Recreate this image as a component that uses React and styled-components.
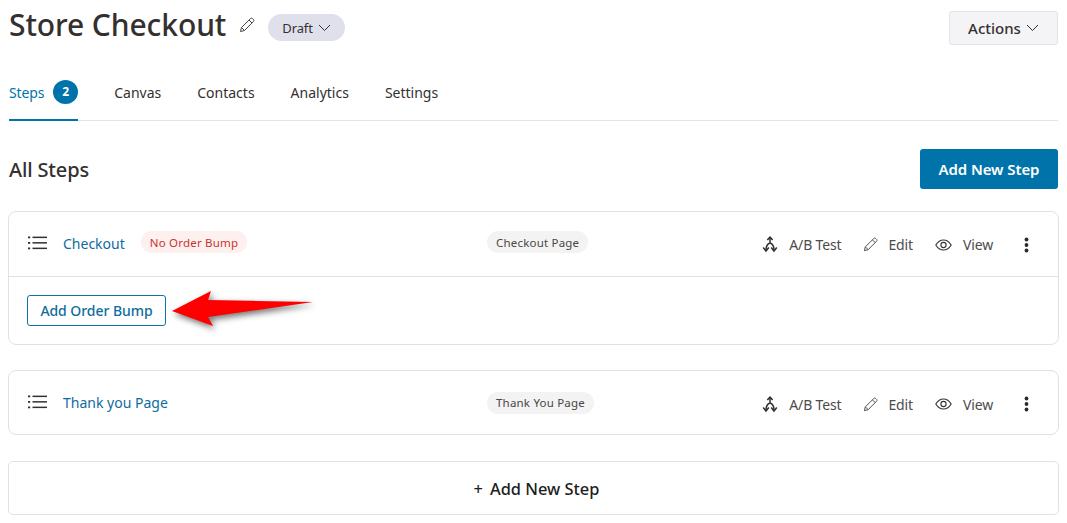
import React from "react";
import styled, { createGlobalStyle } from "styled-components";

const Global = createGlobalStyle`
  html, body { margin: 0; padding: 0; background: #fff; }
  body { font-family: "Noto Sans", "Open Sans", sans-serif; color: #353030; }
  * { box-sizing: border-box; }
`;

const Page = styled.div`
  position: relative;
  width: 1067px;
  height: 523px;
  padding: 0 9px;
  overflow: hidden;
`;
const Head = styled.header`
  height: 56px;
  display: flex;
  align-items: flex-start;
  justify-content: space-between;
`;
const TitleWrap = styled.div`
  display: flex;
  align-items: center;
  height: 50px;
`;
const Title = styled.h1`
  margin: 0;
  font-size: 30px;
  font-weight: 500;
  line-height: 50px;
  letter-spacing: -0.1px;
  color: #353030;
`;
const TitleEdit = styled.span`
  display: flex;
  margin: 0 13px 0 13px;
  color: #353030;
`;
const Status = styled.span`
  display: flex;
  align-items: center;
  gap: 5px;
  height: 27px;
  margin-top: 5px;
  padding: 0 14px;
  border-radius: 14px;
  background: #e0e0ec;
  font-size: 13px;
  letter-spacing: -0.1px;
`;
const Actions = styled.button`
  display: flex;
  align-items: center;
  justify-content: center;
  gap: 5px;
  width: 109px;
  height: 34px;
  margin-top: 11px;
  border: 1px solid #e3e3ec;
  border-radius: 3px;
  background: #f4f4f6;
  font: 500 15px "Noto Sans", sans-serif;
  color: #353030;
`;
const Tabs = styled.nav`
  display: flex;
  gap: 36px;
  height: 65px;
  border-bottom: 1px solid #e2e2ec;
`;
const Tab = styled.a`
  display: flex;
  align-items: flex-start;
  gap: 8px;
  height: 65px;
  padding-top: 25px;
  font-size: 14px;
  line-height: 24px;
  letter-spacing: ${p => (p.$active ? "-0.15px" : "0")};
  color: ${p => (p.$active ? "#0073aa" : "#353030")};
  border-bottom: ${p => (p.$active ? "2px solid #0073aa" : "none")};
`;
const Count = styled.span`
  width: 25px;
  height: 24px;
  margin: -1px 0 0 1px;
  border-radius: 50%;
  background: #0073aa;
  color: #fff;
  text-align: center;
  font-size: 12px;
  font-weight: 700;
  line-height: 23px;
`;
const Section = styled.div`
  display: flex;
  align-items: center;
  justify-content: space-between;
  height: 40px;
  margin: 28px 0 22px;
`;
const SectionTitle = styled.h2`
  margin: 0;
  font-size: 20px;
  font-weight: 500;
  letter-spacing: -0.15px;
`;
const Primary = styled.button`
  width: 138px;
  height: 40px;
  border: 0;
  border-radius: 3px;
  background: #0073aa;
  color: #fff;
  font: 600 15px "Noto Sans", sans-serif;
  letter-spacing: -0.1px;
`;
const Card = styled.section`
  margin: 0 -1px ${p => p.$gap}px -1px;
  border: 1px solid #e0e0ea;
  border-radius: 8px;
  background: #fff;
`;
const Row = styled.div`
  display: grid;
  grid-template-columns: 459px 1fr auto;
  align-items: center;
  height: ${p => p.$h}px;
  padding: ${p => p.$shift || 0}px 29px 0 19px;
  border-bottom: ${p => (p.$line ? "1px solid #e0e0ea" : "none")};
`;
const StepName = styled.div`
  display: flex;
  align-items: center;
`;
const Handle = styled.span`
  display: flex;
  width: 35px;
  margin-top: -3px;
`;
const StepLink = styled.a`
  font-size: 14px;
  font-weight: 400;
  color: #0f6c9e;
  margin-top: -2px;
`;
const Pill = styled.span`
  display: inline-flex;
  align-items: center;
  height: 22px;
  padding: 0 9px;
  border-radius: 11px;
  font-size: 11.5px;
  letter-spacing: 0.2px;
  background: ${p => (p.$danger ? "#fdf0ef" : "#f3f3f3")};
  color: ${p => (p.$danger ? "#c9342f" : "#4a4646")};
  margin: ${p => (p.$danger ? "-4px 0 0 16px" : p.$low ? "-2px 0 0 0" : "-4px 0 0 0")};
  justify-self: start;
`;
const Tools = styled.div`
  display: flex;
  align-items: center;
  margin-top: 1px;
`;
const Tool = styled.span`
  display: flex;
  align-items: center;
  gap: ${p => p.$gap || 10}px;
  margin-left: ${p => p.$ml || 0}px;
  font-size: 14px;
  letter-spacing: -0.15px;
  color: #4d4b4b;
`;
const Dots = styled.span`
  display: flex;
  margin-left: 31px;
`;
const BumpArea = styled.div`
  padding: 18px 18px 0;
  height: 67px;
`;
const Outline = styled.button`
  width: 139px;
  height: 31px;
  border: 1px solid #0f73a6;
  border-radius: 3px;
  background: #fff;
  color: #0f6c9e;
  font: 500 14px "Noto Sans", sans-serif;
  letter-spacing: -0.05px;
`;
const AddCard = styled.button`
  display: flex;
  align-items: center;
  justify-content: center;
  gap: 7px;
  width: 1051px;
  height: 54px;
  margin-left: -1px;
  padding: 1px 0 0 6px;
  border: 1px solid #e0e0ea;
  border-radius: 5px;
  background: #fff;
  color: #1d1d1d;
  font: 500 16.4px "Noto Sans", sans-serif;
`;
const ArrowMark = styled.svg`
  position: absolute;
  left: 165px;
  top: 283px;
  filter: drop-shadow(2px 3px 3px rgba(0, 0, 0, 0.55));
`;

const Chevron = () => (
  <svg width="13" height="8" viewBox="0 0 13 8" fill="none" stroke="#353030" strokeWidth="1">
    <path d="M1 1l5.500 5.500L12 1" />
  </svg>
);
const PencilIcon = ({ size = 16 }) => (
  <svg width={size} height={size} viewBox="0 0 16 16" fill="none" stroke="#444" strokeWidth="1" strokeLinejoin="round">
    <path d="M1.500 14.500l1-4L11.500 1.600c.6-.6 1.400-.6 2 0l.9.9c.6.6.6 1.400 0 2L5.500 13.500z" />
    <path d="M2.500 10.500l3 3M10 3l3 3" />
  </svg>
);
const ListIcon = () => (
  <svg width="19" height="14" viewBox="0 0 19 14" fill="#353030">
    <rect x="0" y="0.500" width="2.200" height="1.800" />
    <rect x="0" y="6" width="2.200" height="1.800" />
    <rect x="0" y="11.500" width="2.200" height="1.800" />
    <rect x="4.500" y="0.600" width="14.500" height="1.500" />
    <rect x="4.500" y="6.100" width="14.500" height="1.500" />
    <rect x="4.500" y="11.600" width="14.500" height="1.500" />
  </svg>
);
const SplitIcon = () => (
  <svg width="16" height="17" viewBox="0 0 16 17" fill="none" stroke="#2f2f2f" strokeWidth="1.5">
    <path d="M8 2v5M8 7C5.200 8 4 10 4 14M8 7c2.800 1 4 3 4 7" />
    <path d="M5.300 4L8 1.200 10.700 4" />
    <path d="M1.200 11.500L4 15l2.800-3.500M9.200 11.500L12 15l2.800-3.500" />
  </svg>
);
const EyeIcon = () => (
  <svg width="17" height="12" viewBox="0 0 17 12" fill="none" stroke="#353030" strokeWidth="1.1">
    <path d="M.8 6C2.800 2.700 5.500 1 8.500 1s5.700 1.700 7.700 5c-2 3.300-4.700 5-7.700 5S2.800 9.300.8 6z" />
    <circle cx="8.500" cy="6" r="2.600" />
  </svg>
);
const DotsIcon = () => (
  <svg width="5" height="16" viewBox="0 0 5 16" fill="#2b2b2b">
    <circle cx="2.500" cy="2.500" r="1.900" />
    <circle cx="2.500" cy="8" r="1.900" />
    <circle cx="2.500" cy="13.500" r="1.900" />
  </svg>
);

const StepTools = () => (
  <Tools>
    <Tool $gap={11}><SplitIcon />A/B Test</Tool>
    <Tool $ml={22}><PencilIcon size={15} />Edit</Tool>
    <Tool $ml={22} $gap={11}><EyeIcon />View</Tool>
    <Dots><DotsIcon /></Dots>
  </Tools>
);

export default function App() {
  return (
    <Page>
      <Global />
      <Head>
        <TitleWrap>
          <Title>Store Checkout</Title>
          <TitleEdit><PencilIcon /></TitleEdit>
          <Status>Draft <Chevron /></Status>
        </TitleWrap>
        <Actions>Actions <Chevron /></Actions>
      </Head>
      <Tabs>
        <Tab $active>Steps <Count>2</Count></Tab>
        <Tab>Canvas</Tab>
        <Tab>Contacts</Tab>
        <Tab>Analytics</Tab>
        <Tab>Settings</Tab>
      </Tabs>
      <Section>
        <SectionTitle>All Steps</SectionTitle>
        <Primary>Add New Step</Primary>
      </Section>
      <Card $gap={25}>
        <Row $h={65} $line>
          <StepName>
            <Handle><ListIcon /></Handle>
            <StepLink>Checkout</StepLink>
            <Pill $danger>No Order Bump</Pill>
          </StepName>
          <Pill>Checkout Page</Pill>
          <StepTools />
        </Row>
        <BumpArea><Outline>Add Order Bump</Outline></BumpArea>
      </Card>
      <Card $gap={26}>
        <Row $h={63} $shift={2}>
          <StepName>
            <Handle><ListIcon /></Handle>
            <StepLink>Thank you Page</StepLink>
          </StepName>
          <Pill $low>Thank You Page</Pill>
          <StepTools />
        </Row>
      </Card>
      <AddCard><span>+</span> Add New Step</AddCard>
      <ArrowMark width="156" height="50" viewBox="165 283 156 50">
        <path d="M172 311L211 291L208 300L313 302L208 317L213 326Z" fill="#fe0000" />
      </ArrowMark>
    </Page>
  );
}
